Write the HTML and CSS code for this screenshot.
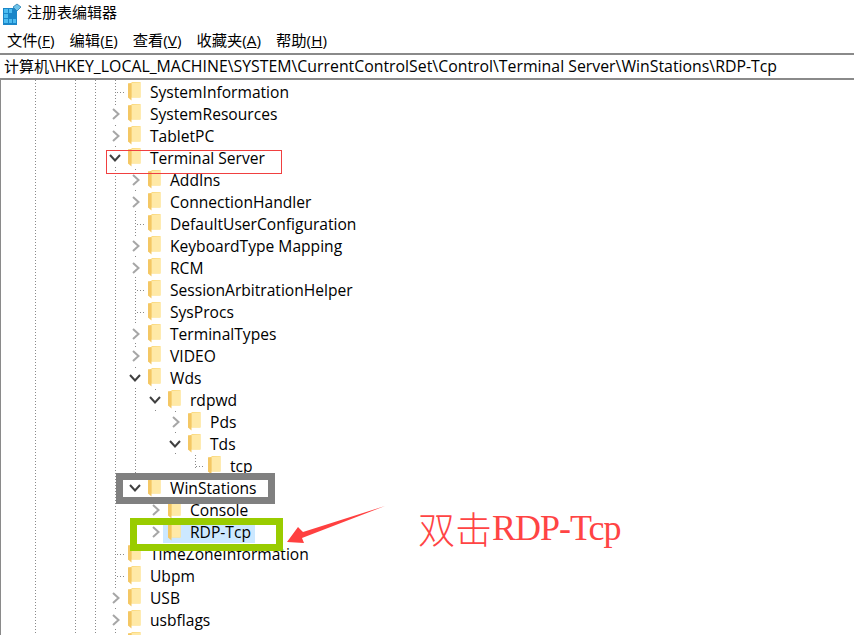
FILE: index.html
```html
<!DOCTYPE html>
<html lang="zh">
<head>
<meta charset="utf-8">
<title>注册表编辑器</title>
<link rel="stylesheet" href="styles.css">
</head>
<body>
<svg class="defs" width="0" height="0" aria-hidden="true">
  <defs>
    <symbol id="folder" viewBox="0 0 13 19">
      <path d="M0 1.5 L3.5 1.5 L3.5 0 L12.5 0 L12.5 15.5 L0 15.5 Z" fill="#fbd97e"/>
      <path d="M3.5 1 L12.5 0.5 L12.5 15.5 L3.5 15.5 Z" fill="#ffe9a6"/>
      <path d="M0 1.5 L3.5 1 L3.5 18.5 L0 15.5 Z" fill="#f4c764"/>
    </symbol>
    <symbol id="closed" viewBox="0 0 10 12">
      <path d="M2 1 L7.5 6 L2 11" fill="none" stroke="#a6a6a6" stroke-width="2"/>
    </symbol>
    <symbol id="open" viewBox="0 0 12 10">
      <path d="M1 2 L6 7.5 L11 2" fill="none" stroke="#404040" stroke-width="2"/>
    </symbol>
  </defs>
</svg>
<div class="window">
  <header class="titlebar">
    <svg class="appicon" viewBox="0 0 20 22" width="20" height="22">
      <path d="M1 5 H15 V22 H1 Z" fill="#1a86c8"/>
      <path d="M2 6 H6 V10 H2 Z M7 6 H10 V10 H7 Z M2 11 H6 V15 H2 Z M2 16 H6 V20 H2 Z M7 16 H10 V20 H7 Z M11 16 H14 V20 H11 Z" fill="#4dbcf0"/>
      <path d="M15 1 L19 4 L15 8 L11 4 Z" fill="#6fc3ea" stroke="#2a7fb0" stroke-width="0.8"/>
    </svg>
    <span class="title">注册表编辑器</span>
  </header>
  <nav class="menubar">
    <span>文件(<u>F</u>)</span>
    <span>编辑(<u>E</u>)</span>
    <span>查看(<u>V</u>)</span>
    <span>收藏夹(<u>A</u>)</span>
    <span>帮助(<u>H</u>)</span>
  </nav>
  <div class="address"><span class="address-root">计算机</span>\HKEY_LOCAL_MACHINE\SYSTEM\CurrentControlSet\Control\Terminal Server\WinStations\RDP-Tcp</div>
  <main class="tree">
    <i class="vline v115"></i>
    <i class="vline v135"></i>
    <i class="vline v155a"></i>
    <i class="vline v175"></i>
    <i class="vline v195"></i>
    <i class="vline v155b"></i>
    <div class="row l0"><i class="dot"></i><svg class="fld"><use href="#folder"/></svg><span class="name">SystemInformation</span></div>
    <div class="row l0"><svg class="chev"><use href="#closed"/></svg><svg class="fld"><use href="#folder"/></svg><span class="name">SystemResources</span></div>
    <div class="row l0"><svg class="chev"><use href="#closed"/></svg><svg class="fld"><use href="#folder"/></svg><span class="name">TabletPC</span></div>
    <div class="row l0"><svg class="chev wide"><use href="#open"/></svg><svg class="fld"><use href="#folder"/></svg><span class="name">Terminal Server</span></div>
    <div class="row l1"><svg class="chev"><use href="#closed"/></svg><svg class="fld"><use href="#folder"/></svg><span class="name">AddIns</span></div>
    <div class="row l1"><svg class="chev"><use href="#closed"/></svg><svg class="fld"><use href="#folder"/></svg><span class="name">ConnectionHandler</span></div>
    <div class="row l1"><i class="dot"></i><svg class="fld"><use href="#folder"/></svg><span class="name">DefaultUserConfiguration</span></div>
    <div class="row l1"><svg class="chev"><use href="#closed"/></svg><svg class="fld"><use href="#folder"/></svg><span class="name">KeyboardType Mapping</span></div>
    <div class="row l1"><svg class="chev"><use href="#closed"/></svg><svg class="fld"><use href="#folder"/></svg><span class="name">RCM</span></div>
    <div class="row l1"><i class="dot"></i><svg class="fld"><use href="#folder"/></svg><span class="name">SessionArbitrationHelper</span></div>
    <div class="row l1"><i class="dot"></i><svg class="fld"><use href="#folder"/></svg><span class="name">SysProcs</span></div>
    <div class="row l1"><svg class="chev"><use href="#closed"/></svg><svg class="fld"><use href="#folder"/></svg><span class="name">TerminalTypes</span></div>
    <div class="row l1"><svg class="chev"><use href="#closed"/></svg><svg class="fld"><use href="#folder"/></svg><span class="name">VIDEO</span></div>
    <div class="row l1"><svg class="chev wide"><use href="#open"/></svg><svg class="fld"><use href="#folder"/></svg><span class="name">Wds</span></div>
    <div class="row l2"><svg class="chev wide"><use href="#open"/></svg><svg class="fld"><use href="#folder"/></svg><span class="name">rdpwd</span></div>
    <div class="row l3"><svg class="chev"><use href="#closed"/></svg><svg class="fld"><use href="#folder"/></svg><span class="name">Pds</span></div>
    <div class="row l3"><svg class="chev wide"><use href="#open"/></svg><svg class="fld"><use href="#folder"/></svg><span class="name">Tds</span></div>
    <div class="row l4"><i class="dot"></i><svg class="fld"><use href="#folder"/></svg><span class="name">tcp</span></div>
    <div class="row l1"><svg class="chev wide"><use href="#open"/></svg><svg class="fld"><use href="#folder"/></svg><span class="name">WinStations</span></div>
    <div class="row l2"><svg class="chev"><use href="#closed"/></svg><svg class="fld"><use href="#folder"/></svg><span class="name">Console</span></div>
    <div class="row l2 selected"><svg class="chev"><use href="#closed"/></svg><span class="sel"><svg class="fld"><use href="#folder"/></svg><span class="name">RDP-Tcp</span></span></div>
    <div class="row l0"><i class="dot"></i><svg class="fld"><use href="#folder"/></svg><span class="name">TimeZoneInformation</span></div>
    <div class="row l0"><i class="dot"></i><svg class="fld"><use href="#folder"/></svg><span class="name">Ubpm</span></div>
    <div class="row l0"><svg class="chev"><use href="#closed"/></svg><svg class="fld"><use href="#folder"/></svg><span class="name">USB</span></div>
    <div class="row l0"><svg class="chev"><use href="#closed"/></svg><svg class="fld"><use href="#folder"/></svg><span class="name">usbflags</span></div>
    <div class="row l0"><svg class="chev"><use href="#closed"/></svg><svg class="fld"><use href="#folder"/></svg><span class="name"></span></div>
  </main>
  <div class="mark mark-red"></div>
  <div class="mark mark-gray"></div>
  <div class="mark mark-green"></div>
  <svg class="arrow" viewBox="0 0 100 40" width="100" height="40">
    <path d="M98 0 L16 26 L11 21 L0 36 L17 37 L15 32 Z" fill="#ff4040"/>
  </svg>
  <div class="note"><span class="note-cjk">双击</span><span class="note-latin">RDP-Tcp</span></div>
</div>
</body>
</html>
```
FILE: styles.css
```css
* { box-sizing: border-box; }
html, body { margin: 0; padding: 0; background: #fff; }
body { width: 854px; height: 635px; overflow: hidden; }
.defs { position: absolute; }
.window {
  position: relative;
  width: 854px;
  height: 635px;
  overflow: hidden;
  font-family: "Open Sans", "Noto Sans CJK SC", sans-serif;
  color: #000;
}
.titlebar {
  display: flex;
  align-items: center;
  gap: 5px;
  height: 27px;
  padding: 0 0 0 2px;
}
.title { font-family: "Noto Sans CJK SC", sans-serif; font-size: 15px; margin-top: -4px; }
.menubar {
  display: flex;
  gap: 15px;
  height: 26px;
  align-items: center;
  padding: 0 0 2px 7px;
  font-size: 15.3px;
}
.address {
  height: 27px;
  border-top: 2px solid #8a8a8a;
  border-bottom: 2px solid #8a8a8a;
  padding-left: 4px;
  font-size: 15.85px;
  line-height: 23px;
  white-space: nowrap;
}
.address-root { font-size: 15px; }
.tree {
  position: relative;
  height: 555px;
  padding-top: 1px;
  border-left: 1px solid #8a8a8a;
  background-image:
    repeating-linear-gradient(#8a8a8a 0 1px, transparent 1px 3px),
    repeating-linear-gradient(#8a8a8a 0 1px, transparent 1px 3px),
    repeating-linear-gradient(#8a8a8a 0 1px, transparent 1px 3px);
  background-size: 1px 100%;
  background-repeat: no-repeat;
  background-position: 34px 0, 74px 0, 94px 0;
}
.vline {
  position: absolute;
  width: 1px;
  background-image: repeating-linear-gradient(#8a8a8a 0 1px, transparent 1px 3px);
}
.v115 { left: 114px; top: 0; height: 555px; }
.v135 { left: 134px; top: 89px; height: 320px; }
.v155a { left: 154px; top: 309px; height: 22px; }
.v175 { left: 174px; top: 331px; height: 44px; }
.v195 { left: 194px; top: 375px; height: 13px; }
.v155b { left: 154px; top: 419px; height: 33px; }
.row {
  position: relative;
  display: flex;
  align-items: center;
  height: 22px;
  font-size: 15.6px;
  white-space: nowrap;
}
.l0 { padding-left: 127px; }
.l1 { padding-left: 147px; }
.l2 { padding-left: 167px; }
.l3 { padding-left: 187px; }
.l4 { padding-left: 207px; }
.fld { display: block; width: 13px; height: 19px; flex: none; margin-top: -2px; }
.name { margin-left: 8px; padding: 0 1px; line-height: 22px; background: #fff; }
.chev, .dot { position: absolute; }
.chev { width: 10px; height: 18px; top: 2px; padding: 3px 0; background: #fff; }
.chev.wide { width: 12px; height: 18px; top: 2px; padding: 4px 0; }
.dot {
  width: 8px;
  height: 1px;
  top: 11px;
  background-image: repeating-linear-gradient(90deg, #8a8a8a 0 1px, transparent 1px 3px);
}
.l0 .chev { left: 110px; } .l1 .chev { left: 130px; } .l2 .chev { left: 150px; } .l3 .chev { left: 170px; }
.l0 .chev.wide { left: 108px; } .l1 .chev.wide { left: 128px; } .l2 .chev.wide { left: 148px; } .l3 .chev.wide { left: 168px; }
.l0 .dot { left: 116px; } .l1 .dot { left: 136px; } .l4 .dot { left: 195px; }
.sel {
  display: flex;
  align-items: center;
  height: 22px;
  margin-left: -5px;
  padding: 0 3px 0 5px;
  background: #cce8ff;
}
.sel .name { background: none; }
.mark { position: absolute; }
.mark-red { left: 106px; top: 150px; width: 176px; height: 24px; border: 1px solid #f04040; }
.mark-gray { left: 116px; top: 473px; width: 159px; height: 31px; border: 7px solid #808080; }
.mark-green { left: 130px; top: 518px; width: 153px; height: 33px; border: 7px solid #99cc00; }
.arrow { position: absolute; left: 287px; top: 506px; }
.note {
  position: absolute;
  left: 418px;
  top: 505px;
  height: 46px;
  display: flex;
  align-items: center;
  color: #ff4444;
  white-space: nowrap;
}
.note-cjk { font-family: "Noto Sans CJK SC", sans-serif; font-size: 37px; font-weight: 300; line-height: 46px; }
.note-latin { font-family: "Liberation Serif", serif; font-size: 36px; line-height: 46px; letter-spacing: -1px; }
```
